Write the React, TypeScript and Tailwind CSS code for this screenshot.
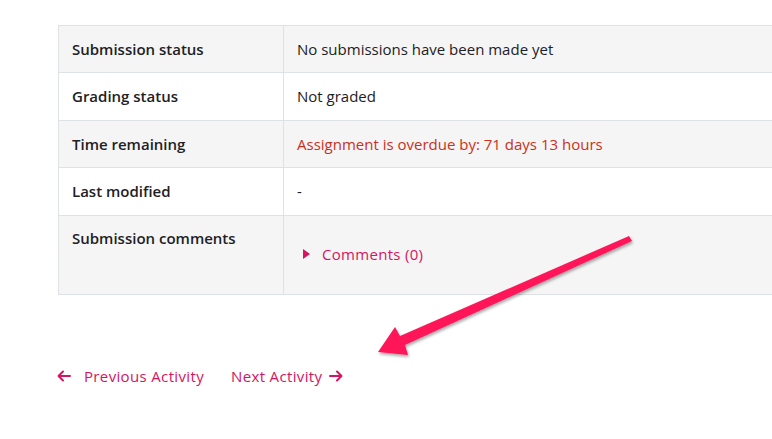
import React from "react";

const rows = [
  { label: "Submission status", value: "No submissions have been made yet", tone: "", h: "h-[47px]" },
  { label: "Grading status", value: "Not graded", tone: "", h: "h-[48px]" },
  { label: "Time remaining", value: "Assignment is overdue by: 71 days 13 hours", tone: "text-[#ca3120]", h: "h-[47px]" },
  { label: "Last modified", value: "-", tone: "", h: "h-[48px]" },
];

const App: React.FC = () => {
  return (
    <div className="relative w-[772px] h-[439px] overflow-hidden bg-white text-[15px] text-[#1d2125] font-['Open_Sans','Liberation_Sans',sans-serif]">
      <div className="pl-[58px] pt-[25px]">
        <table className="w-[760px] border-collapse border border-[#dee2e6]">
          <tbody>
            {rows.map((r, i) => (
              <tr key={r.label} className={i % 2 === 0 ? "bg-[#f5f5f5]" : "bg-white"}>
                <th className={"w-[225px] border border-[#dee2e6] px-[13px] text-left font-semibold align-middle " + r.h}>{r.label}</th>
                <td className={"border border-[#dee2e6] px-[13px] align-middle " + r.tone}>{r.value}</td>
              </tr>
            ))}
            <tr className="bg-[#f5f5f5]">
              <th className="w-[225px] h-[79px] border border-[#dee2e6] px-[13px] pt-[11px] text-left font-semibold align-top">Submission comments</th>
              <td className="border border-[#dee2e6] px-[13px] pt-[27px] align-top">
                <a className="ml-[6px] flex items-center gap-[12px] text-[#d6145f] tracking-[0.3px]">
                  <svg width="7" height="10" viewBox="0 0 7 10"><path d="M0 0 L7 5 L0 10 Z" fill="#d6145f" /></svg>
                  Comments (0)
                </a>
              </td>
            </tr>
          </tbody>
        </table>
      </div>

      <div className="flex items-center gap-[27px] pl-[57px] mt-[70px] text-[#d6145f] tracking-[0.35px]">
        <a className="flex items-center gap-[13px]">
          <svg width="14" height="12" viewBox="0 0 14 12" fill="none" stroke="#d6145f" strokeWidth="2" strokeLinecap="round" strokeLinejoin="round">
            <path d="M13 6 H1.5 M6 1.5 L1.5 6 L6 10.5" />
          </svg>
          Previous Activity
        </a>
        <a className="flex items-center gap-[7px]">
          Next Activity
          <svg width="14" height="12" viewBox="0 0 14 12" fill="none" stroke="#d6145f" strokeWidth="2" strokeLinecap="round" strokeLinejoin="round">
            <path d="M1 6 H12.5 M8 1.5 L12.5 6 L8 10.5" />
          </svg>
        </a>
      </div>

      <svg className="absolute left-0 top-0 pointer-events-none" width="772" height="439" viewBox="0 0 772 439">
        <defs>
          <filter id="sh" x="-10%" y="-10%" width="120%" height="130%">
            <feDropShadow dx="1" dy="2" stdDeviation="1.5" floodColor="#000" floodOpacity="0.35" />
          </filter>
        </defs>
        <polygon
          points="378,352 395,327 400,336 629,236 632,241 405,345 408,355"
          fill="#ff1559"
          filter="url(#sh)"
        />
      </svg>
    </div>
  );
};

export default App;
